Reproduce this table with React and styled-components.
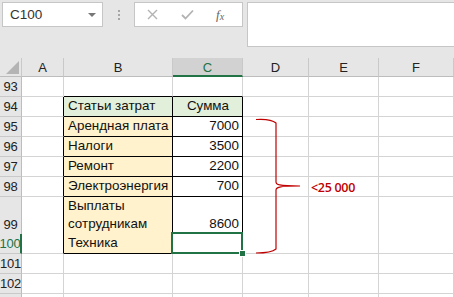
import React from "react";
import styled, { createGlobalStyle, css } from "styled-components";

const GREEN = "#217346";
const GRID = "#d4d4d4";
const RED = "#c00000";
const COLS = "22px 42px 109px 70px 66px 70px 1fr";

const GlobalStyle = createGlobalStyle`
  html, body {
    margin: 0;
    padding: 0;
    background: #fff;
    overflow: hidden;
  }
  body {
    font-family: "Liberation Sans", Arial, sans-serif;
  }
`;

const Page = styled.div`
  width: 454px;
  height: 297px;
  overflow: hidden;
  background: #fff;
`;

const FormulaBar = styled.div`
  height: 58px;
  box-sizing: border-box;
  background: #e6e6e6;
  padding: 2px 0 0 2px;
  display: flex;
  align-items: flex-start;
`;

const NameBox = styled.div`
  width: 101px;
  height: 25px;
  box-sizing: border-box;
  background: #fff;
  border: 1px solid #c6c6c6;
  display: flex;
  align-items: center;
  justify-content: space-between;
  padding: 0 6px 0 7px;
  font-size: 13.5px;
  color: #333;
`;

const DropArrow = styled.span`
  width: 0;
  height: 0;
  border-left: 4px solid transparent;
  border-right: 4px solid transparent;
  border-top: 4px solid #777;
`;

const Grip = styled.div`
  width: 31px;
  height: 25px;
  display: flex;
  flex-direction: column;
  align-items: center;
  justify-content: center;
  gap: 2px;

  span {
    width: 2px;
    height: 2px;
    background: #a6a6a6;
  }
`;

const FnBox = styled.div`
  width: 109px;
  height: 25px;
  box-sizing: border-box;
  background: #fff;
  border: 1px solid #c6c6c6;
  display: flex;
  align-items: center;
  padding-left: 12px;
  gap: 23px;
`;

const FxLabel = styled.span`
  font-family: "Liberation Serif", "Times New Roman", serif;
  font-style: italic;
  font-size: 13px;
  color: #666;
  margin-left: -1px;

  sub {
    font-size: 10px;
    vertical-align: -1px;
  }
`;

const FormulaInput = styled.div`
  flex: 1;
  height: 45px;
  margin-left: 4px;
  box-sizing: border-box;
  background: #fff;
  border: 1px solid #c6c6c6;
  border-right: none;
`;

const Sheet = styled.div`
  position: relative;
`;

const Row = styled.div`
  display: grid;
  grid-template-columns: ${COLS};
  height: ${({ $h }) => $h}px;
`;

const HeadCell = styled.div`
  box-sizing: border-box;
  background: ${({ $selected }) => ($selected ? "#d2d2d2" : "#e6e6e6")};
  border-right: 1px solid #c9c9c9;
  border-bottom: ${({ $selected }) =>
    $selected ? `2px solid ${GREEN}` : "1px solid #bdbdbd"};
  color: ${({ $selected }) => ($selected ? GREEN : "#222")};
  font-size: 13px;
  display: flex;
  align-items: center;
  justify-content: center;
  padding-top: 1px;
`;

const Corner = styled(HeadCell)`
  position: relative;
  svg {
    position: absolute;
    right: 2px;
    bottom: 2px;
  }
`;

const RowHead = styled.div`
  box-sizing: border-box;
  background: #e6e6e6;
  border-bottom: 1px solid #c9c9c9;
  border-right: ${({ $selected }) =>
    $selected ? `2px solid ${GREEN}` : "1px solid #bdbdbd"};
  color: ${({ $selected }) => ($selected ? GREEN : "#222")};
  font-size: 13px;
  display: flex;
  align-items: flex-end;
  justify-content: center;
  padding-bottom: 2px;
  letter-spacing: -0.2px;
`;

const fills = {
  head: "#e2efda",
  label: "#fff2cc",
  none: "#fff",
};

const Cell = styled.div`
  position: relative;
  box-sizing: border-box;
  background: ${({ $fill }) => fills[$fill || "none"]};
  border-right: 1px solid ${({ $edgeRight }) => ($edgeRight ? "#000" : GRID)};
  border-bottom: 1px solid ${({ $edgeBottom }) => ($edgeBottom ? "#000" : GRID)};
  font-size: 13.4px;
  line-height: 18px;
  color: #111;
  padding: 0 3px 1px 4px;
  display: flex;
  align-items: flex-end;
  justify-content: ${({ $align }) =>
    $align === "right" ? "flex-end" : $align === "center" ? "center" : "flex-start"};
  white-space: nowrap;

  ${({ $active }) =>
    $active &&
    css`
      &::after {
        content: "";
        position: absolute;
        left: -2px;
        top: -2px;
        right: -1px;
        bottom: -1px;
        border: 2px solid ${GREEN};
      }
      &::before {
        content: "";
        position: absolute;
        right: -4px;
        bottom: -4px;
        width: 5px;
        height: 5px;
        background: ${GREEN};
        border: 1px solid #fff;
        z-index: 1;
      }
    `}
`;

const Wrapped = styled.span`
  white-space: normal;
  width: 80px;
`;

const Brace = styled.svg`
  position: absolute;
  left: 252px;
  top: 60px;
  overflow: visible;
  pointer-events: none;
`;

const Note = styled.div`
  position: absolute;
  left: 311px;
  top: 122px;
  font-family: "Open Sans", "Liberation Sans", sans-serif;
  font-size: 12.5px;
  font-weight: 600;
  line-height: 15px;
  color: ${RED};
  letter-spacing: -0.3px;
`;

const columns = ["A", "B", "C", "D", "E", "F"];

// row 103 only peeks in under the last visible row, so it carries no label
const rows = [
  { n: 93 },
  { n: 94, b: "Статьи затрат", c: "Сумма", head: true },
  { n: 95, b: "Арендная плата", c: "7000" },
  { n: 96, b: "Налоги", c: "3500" },
  { n: 97, b: "Ремонт", c: "2200" },
  { n: 98, b: "Электроэнергия", c: "700" },
  { n: 99, h: 37, b: "Выплаты сотрудникам", c: "8600", wrap: true },
  { n: 100, b: "Техника", c: "" },
  { n: 101 },
  { n: 102 },
  { n: 103, hideLabel: true },
];

const activeRow = 100;

function SheetRow({ row }) {
  const inTable = row.b !== undefined;
  const aboveTable = row.n === 93;
  return (
    <Row $h={row.h || 20}>
      <RowHead $selected={row.n === activeRow}>{row.hideLabel ? "" : row.n}</RowHead>
      <Cell $edgeRight={inTable} />
      <Cell
        $fill={inTable ? (row.head ? "head" : "label") : "none"}
        $edgeRight={inTable}
        $edgeBottom={inTable || aboveTable}
      >
        {row.wrap ? <Wrapped>{row.b}</Wrapped> : row.b}
      </Cell>
      <Cell
        $fill={row.head ? "head" : "none"}
        $align={row.head ? "center" : "right"}
        $edgeRight={inTable}
        $edgeBottom={inTable || aboveTable}
        $active={row.n === activeRow}
      >
        {row.c}
      </Cell>
      <Cell />
      <Cell />
      <Cell />
    </Row>
  );
}

export default function App() {
  return (
    <Page>
      <GlobalStyle />
      <FormulaBar>
        <NameBox>
          C100
          <DropArrow />
        </NameBox>
        <Grip>
          <span />
          <span />
          <span />
        </Grip>
        <FnBox>
          <svg width="11" height="11" viewBox="0 0 11 11">
            <path d="M1 1 L10 10 M10 1 L1 10" stroke="#b3b3b3" strokeWidth="1.4" />
          </svg>
          <svg width="13" height="11" viewBox="0 0 13 11">
            <path d="M1 6 L4.5 9.5 L12 1.5" stroke="#b3b3b3" strokeWidth="1.8" fill="none" />
          </svg>
          <FxLabel>
            f<sub>x</sub>
          </FxLabel>
        </FnBox>
        <FormulaInput />
      </FormulaBar>

      <Sheet>
        <Row $h={19}>
          <Corner>
            <svg width="13" height="13" viewBox="0 0 13 13">
              <path d="M13 0 L13 13 L0 13 Z" fill="#b4b4b4" />
            </svg>
          </Corner>
          {columns.map((col) => (
            <HeadCell key={col} $selected={col === "C"}>
              {col}
            </HeadCell>
          ))}
        </Row>
        {rows.map((row) => (
          <SheetRow key={row.n} row={row} />
        ))}

        <Brace width="50" height="137" viewBox="0 0 50 137">
          <path
            d="M4 1.5 C12 1, 20 1.5, 24 5 V64 C24 66.5, 26 68, 48 68 C26 68, 24 69.5, 24 72 V131 C20 134.5, 12 135, 4 135"
            stroke={RED}
            strokeWidth="1.2"
            fill="none"
          />
        </Brace>
        <Note>&lt;25 000</Note>
      </Sheet>
    </Page>
  );
}
